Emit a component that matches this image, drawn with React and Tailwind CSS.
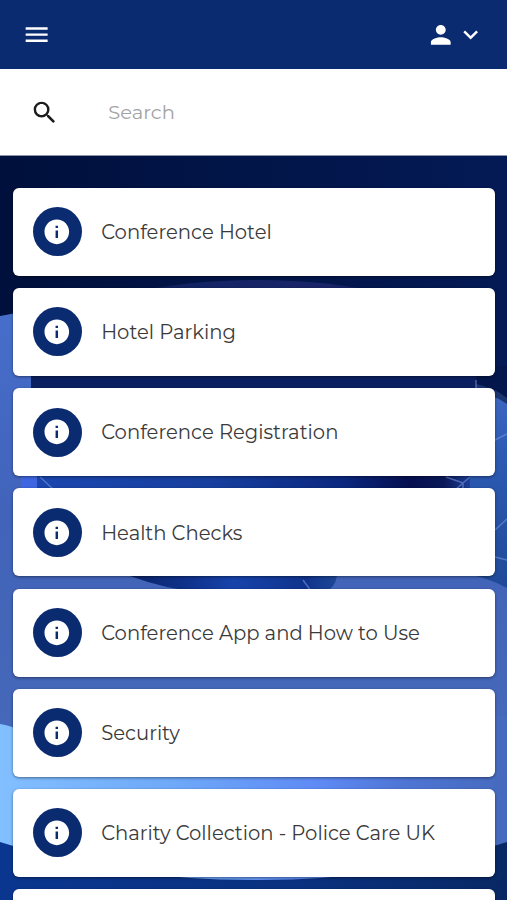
import { MdMenu, MdSearch, MdPerson, MdExpandMore, MdInfo } from 'react-icons/md';

const items = [
  'Conference Hotel',
  'Hotel Parking',
  'Conference Registration',
  'Health Checks',
  'Conference App and How to Use',
  'Security',
  'Charity Collection - Police Care UK',
  '',
];

function Backdrop() {
  return (
    <svg
      className="absolute inset-0 -z-10 h-full w-full"
      viewBox="0 0 507 744"
      preserveAspectRatio="none"
      aria-hidden="true"
    >
      <defs>
        <linearGradient id="night" x1="0" y1="0" x2="1" y2="0">
          <stop offset="0" stopColor="#00103c" />
          <stop offset="1" stopColor="#041a55" />
        </linearGradient>
        <linearGradient id="rise" x1="0" y1="0" x2="1" y2="0">
          <stop offset="0" stopColor="#132465" stopOpacity="0" />
          <stop offset="0.35" stopColor="#132465" />
          <stop offset="0.7" stopColor="#1a2468" />
          <stop offset="1" stopColor="#132465" stopOpacity="0" />
        </linearGradient>
        <linearGradient id="haze" x1="0" y1="0" x2="0" y2="1">
          <stop offset="0" stopColor="#476ecb" />
          <stop offset="0.35" stopColor="#4163ba" />
          <stop offset="0.55" stopColor="#4466b8" />
          <stop offset="1" stopColor="#4a6cc0" />
        </linearGradient>
        <linearGradient id="drum" x1="0" y1="0" x2="1" y2="0">
          <stop offset="0" stopColor="#1a46ae" />
          <stop offset="0.4" stopColor="#173f9e" />
          <stop offset="0.7" stopColor="#0b2880" />
          <stop offset="0.86" stopColor="#050f50" />
          <stop offset="0.94" stopColor="#0a1858" />
          <stop offset="1" stopColor="#1c3f98" />
        </linearGradient>
        <linearGradient id="base" x1="0" y1="0" x2="1" y2="0">
          <stop offset="0" stopColor="#0b2468" />
          <stop offset="0.25" stopColor="#0e3088" />
          <stop offset="0.5" stopColor="#1743aa" />
          <stop offset="0.85" stopColor="#0f338c" />
          <stop offset="1" stopColor="#1d4896" />
        </linearGradient>
        <linearGradient id="glow" x1="0" y1="0" x2="1" y2="0">
          <stop offset="0" stopColor="#82bfff" />
          <stop offset="0.35" stopColor="#6ea8f8" />
          <stop offset="0.63" stopColor="#5e8af5" />
          <stop offset="0.8" stopColor="#4e75d4" />
          <stop offset="1" stopColor="#466abd" />
        </linearGradient>
        <linearGradient id="floor" x1="0" y1="0" x2="1" y2="0">
          <stop offset="0" stopColor="#0a368f" />
          <stop offset="0.6" stopColor="#0a317f" />
          <stop offset="1" stopColor="#082864" />
        </linearGradient>
        <linearGradient id="globe" x1="0" y1="0" x2="0" y2="1">
          <stop offset="0" stopColor="#3d68c2" />
          <stop offset="0.3" stopColor="#2d5bb4" />
          <stop offset="1" stopColor="#204a98" />
        </linearGradient>
      </defs>
      <rect width="507" height="744" fill="url(#night)" />
      <ellipse cx="257" cy="170" rx="180" ry="46" fill="url(#rise)" />
      <path d="M0 160Q6 159 31 154V320H465V238Q490 228 507 246V744H0Z" fill="url(#haze)" />
      <path d="M31 154H480V262H31Z" fill="#0b2060" />
      <path d="M476 210L507 210V246L476 230Z" fill="#04174c" />
      <path d="M476 228Q495 232 507 242V252H476Z" fill="#1b3570" />
      <path d="M21 262H40V350H21Z" fill="#3e66e0" />
      <rect x="37" y="262" width="433" height="80" fill="url(#drum)" />
      <path d="M470 236Q490 236 507 248V432Q485 420 455 416L470 340Z" fill="url(#globe)" />
      <path d="M130 420Q165 433 200 436H325Q335 432 337 420V400H130Z" fill="url(#base)" />
      <path
        d="M40 321L54 334M446 321L463 327L470 321M463 327L455 334M463 327V335M476 224V240M493 285L507 278M495 374L507 363M495 401L507 404M303 424L311 435"
        fill="none"
        stroke="#7d9ce4"
        strokeOpacity="0.55"
        strokeWidth="1.5"
      />
      <path d="M0 568Q20 571 60 592L507 620V744H0Z" fill="url(#glow)" />
      <path d="M495 560H507V744H495Z" fill="#466abd" />
      <path d="M0 686Q120 725 260 724Q390 724 507 686V744H0Z" fill="url(#floor)" />
    </svg>
  );
}

export default function App() {
  return (
    <div className="flex h-[900px] w-full flex-col overflow-hidden font-['Montserrat','Inter',sans-serif]">
      <header className="flex h-[69px] shrink-0 items-center justify-between bg-[#0a2b70] px-[22px] pt-px text-white">
        <button aria-label="Menu">
          <MdMenu className="size-[29.3px]" />
        </button>
        <button className="flex items-center" aria-label="Account">
          <MdPerson className="size-[29.6px]" />
          <MdExpandMore className="size-[29.3px]" />
        </button>
      </header>

      {/* Search */}
      <div className="flex h-[87px] shrink-0 items-center border-b border-[#8b95ab] bg-white pl-[30px] pt-px">
        <MdSearch className="size-[29.3px] shrink-0 text-[#1c1c1c]" />
        <input
          type="text"
          placeholder="Search"
          className="ml-[49px] min-w-0 flex-1 text-[19.5px] outline-none placeholder:text-[#a3a3a3]"
        />
      </div>

      {/* Information pages */}
      <main className="relative isolate min-h-0 flex-1 overflow-hidden pl-[13px] pr-[12px] pt-[31.8px]">
        <Backdrop />
        <ul className="flex flex-col gap-[12.2px]">
          {items.map((title, i) => (
            <li
              key={i}
              className="flex h-[88px] shrink-0 items-center rounded-md bg-white pl-[19.6px] shadow-[0_1px_3px_rgba(0,0,0,0.45)]"
            >
              <span className="flex size-[49px] shrink-0 items-center justify-center rounded-full bg-[#0a2b70] text-white">
                <MdInfo className="size-[29.6px]" />
              </span>
              <span className="ml-[19.6px] whitespace-nowrap pt-[2px] text-[19.58px] text-[#3a3a3a]">{title}</span>
            </li>
          ))}
        </ul>
      </main>
    </div>
  );
}
